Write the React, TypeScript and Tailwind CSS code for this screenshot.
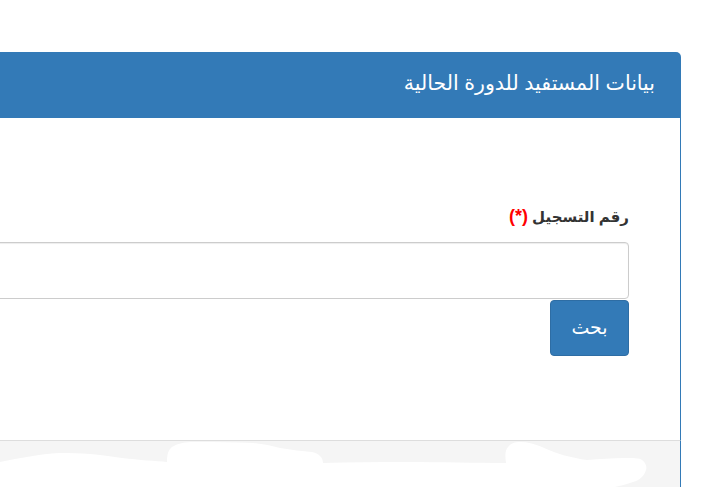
import React from "react";

export default function App() {
  const font = { fontFamily: '"Liberation Sans", "DejaVu Sans", Arial, sans-serif' };
  return (
    <div dir="rtl" className="relative w-[708px] h-[487px] overflow-hidden bg-white" style={font}>
      <div className="pt-[52px] pr-[27px] flex">
        <div className="w-[900px] shrink-0 flex flex-col">
          <div className="h-[66px] bg-[#337ab7] rounded-tr-[5px] flex items-center pr-[26px] text-white text-[20.5px] pb-[4px]">
            بيانات المستفيد للدورة الحالية
          </div>
          <div className="h-[322px] border-r border-[#337ab7] bg-white pr-[51px] pt-[88px]">
            <label className="block text-[15px] font-bold text-[#333] leading-[20px] mb-[15px]">
              رقم التسجيل <span className="text-[#ff0000] text-[18px]">(*)</span>
            </label>
            <input
              className="block w-full h-[57px] border border-[#ccc] rounded-[4px] shadow-[inset_0_1px_1px_rgba(0,0,0,0.075)] bg-white"
              type="text"
            />
            <button className="mt-px w-[79px] h-[56px] bg-[#337ab7] border border-[#2e6da4] rounded-[4px] text-white text-[19px]">
              بحث
            </button>
          </div>
          <div className="h-[60px] border-t border-r border-t-[#dddddd] border-r-[#337ab7] bg-[#f5f5f5]" />
        </div>
      </div>
      <svg className="absolute top-0 left-0 pointer-events-none" width="708" height="487" viewBox="0 0 708 487">
        <path
          d="M0 462 C20 458 40 454 59 453 C70 453 80 453 90 454 C105 455 112 457 122 458 C140 460 155 461 167 462 C167 455 168 450 172 447 C178 443 186 442 194 442 C215 442 235 442 253 443 C263 444 272 446 280 448 C292 450 302 451 312 452 C320 454 323 458 323 463 C350 462 380 462 407 462 C440 462 475 463 506 463 C505 456 505 450 508 447 C511 443 515 442 520 442 C528 442 535 444 542 447 C557 454 572 458 587 460 C600 459 612 458 624 458 C632 458 640 458 642 460 C646 463 647 467 646 470 C644 476 640 480 633 482 C627 484 620 486 615 487 L0 487 Z"
          fill="#ffffff"
        />
      </svg>
    </div>
  );
}
